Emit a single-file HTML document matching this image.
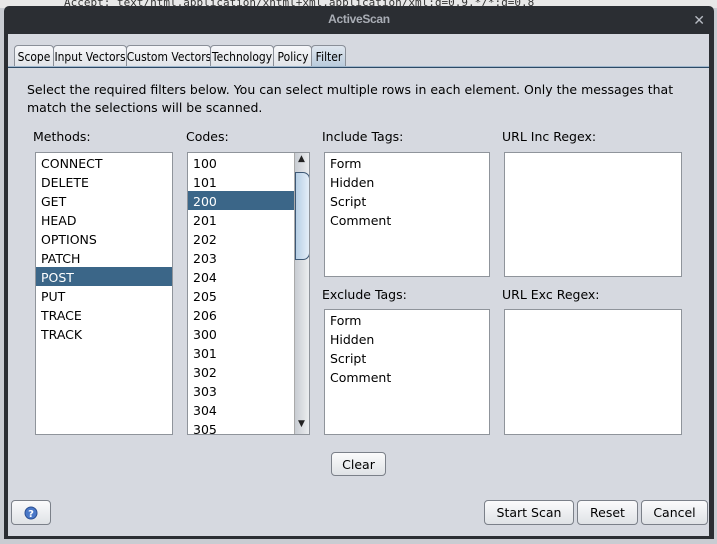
<!DOCTYPE html>
<html><head><meta charset="utf-8"><style>
*{box-sizing:border-box;margin:0;padding:0}
body{width:717px;height:544px;overflow:hidden;background:#c9ccd2;font-family:"DejaVu Sans","Liberation Sans",sans-serif;font-size:12px;color:#000;position:relative}
.abs{position:absolute}
.top{left:0;top:0;width:717px;height:8px;background:#e8e8e8;font-family:"DejaVu Sans Mono",monospace;font-size:11px;line-height:6px;overflow:hidden;padding-left:64px;color:#333;white-space:nowrap}
.win{left:4px;top:6px;width:710px;height:533px;background:#2b2e33;border-radius:5px 5px 0 0}
.title{left:0;top:0;width:710px;height:28px;color:#a9adb5;text-align:center;font-size:12px;line-height:27px;font-family:"Liberation Sans",sans-serif;font-weight:bold;letter-spacing:-0.3px}
.x{right:9px;top:7px;color:#b8bcc4;font-size:14px;font-weight:bold}
.body{left:4px;top:28px;width:701px;height:502px;background:#d6d9e0}
.tab{top:45px;height:22px;border:1px solid #8a8f98;border-bottom:none;border-radius:4px 4px 0 0;background:linear-gradient(#f7f8fa,#dfe2e7);line-height:22px;font-size:12.5px;white-space:nowrap}
.tab span{position:absolute;left:50%;top:0;transform:translateX(-50%) scaleX(0.86)}
.tab.sel{background:linear-gradient(#dfe6ee,#b9cbdc)}
.line{left:8px;top:66px;width:701px;height:2px;background:#2d4a66;border-top:1px solid #9fb6cc}
.desc{left:27px;top:81px;font-size:12.5px;line-height:18px;width:680px}
.lbl{font-size:12.5px}
.box{background:#fff;border:1px solid #8f949b}
.row{height:19px;line-height:19px;padding-left:5px;padding-top:1px;font-size:12.5px}
.row.s{background:#3b6688;color:#fff}
.btn{border:1px solid #7b8089;border-radius:4px;background:linear-gradient(#fbfbfc,#dfe2e6);text-align:center;font-size:12.5px;line-height:24px}
</style></head><body>
<div class="abs top">Accept: text/html,application/xhtml+xml,application/xml;q=0.9,*/*;q=0.8</div>
<div class="abs win">
 <div class="abs title">ActiveScan</div>
 <div class="abs x">✕</div>
 <div class="abs body"></div>
</div>
<div class="abs tab" style="left:14px;width:40px"><span>Scope</span></div>
<div class="abs tab" style="left:53px;width:74px"><span>Input Vectors</span></div>
<div class="abs tab" style="left:126px;width:85px"><span>Custom Vectors</span></div>
<div class="abs tab" style="left:210px;width:64px"><span>Technology</span></div>
<div class="abs tab" style="left:273px;width:39px"><span>Policy</span></div>
<div class="abs tab sel" style="left:311px;width:35px"><span>Filter</span></div>
<div class="abs line"></div>
<div class="abs desc">Select the required filters below. You can select multiple rows in each element. Only the messages that match the selections will be scanned.</div>

<div class="abs lbl" style="left:33px;top:129px">Methods:</div>
<div class="abs lbl" style="left:186px;top:129px">Codes:</div>
<div class="abs lbl" style="left:322px;top:129px">Include Tags:</div>
<div class="abs lbl" style="left:502px;top:129px">URL Inc Regex:</div>
<div class="abs lbl" style="left:322px;top:287px">Exclude Tags:</div>
<div class="abs lbl" style="left:502px;top:287px">URL Exc Regex:</div>

<div class="abs box" style="left:35px;top:152px;width:138px;height:283px">
<div class="row">CONNECT</div><div class="row">DELETE</div><div class="row">GET</div><div class="row">HEAD</div><div class="row">OPTIONS</div><div class="row">PATCH</div><div class="row s">POST</div><div class="row">PUT</div><div class="row">TRACE</div><div class="row">TRACK</div>
</div>
<div class="abs box" style="left:187px;top:152px;width:123px;height:283px;overflow:hidden">
<div style="width:106px">
<div class="row">100</div><div class="row">101</div><div class="row s">200</div><div class="row">201</div><div class="row">202</div><div class="row">203</div><div class="row">204</div><div class="row">205</div><div class="row">206</div><div class="row">300</div><div class="row">301</div><div class="row">302</div><div class="row">303</div><div class="row">304</div><div class="row">305</div>
</div>
<div class="abs" style="left:106px;top:0;width:16px;height:281px;background:linear-gradient(90deg,#c8ccd2,#eef0f2);border-left:1px solid #aaa">
 <div class="abs" style="left:3px;top:1px;font-size:9px;color:#222">▲</div>
 <div class="abs" style="left:0px;top:19px;width:15px;height:88px;border:1px solid #3d5875;border-radius:0 7px 7px 0;background:linear-gradient(90deg,#b7cfe5,#e4eef8)"></div>
 <div class="abs" style="left:3px;top:266px;font-size:9px;color:#222">▼</div>
</div>
</div>
<div class="abs box" style="left:324px;top:152px;width:166px;height:125px">
<div class="row">Form</div><div class="row">Hidden</div><div class="row">Script</div><div class="row">Comment</div></div>
<div class="abs box" style="left:504px;top:152px;width:178px;height:125px"></div>
<div class="abs box" style="left:324px;top:309px;width:166px;height:126px">
<div class="row">Form</div><div class="row">Hidden</div><div class="row">Script</div><div class="row">Comment</div></div>
<div class="abs box" style="left:504px;top:309px;width:178px;height:126px"></div>

<div class="abs btn" style="left:331px;top:452px;width:55px;height:24px">Clear</div>
<div class="abs btn" style="left:11px;top:500px;width:40px;height:25px">
 <svg width="14" height="14" style="margin-top:5px" viewBox="0 0 14 14"><circle cx="7" cy="7" r="6" fill="#4a78c8" stroke="#2c4f92"/><text x="7" y="11" font-size="10" font-weight="bold" fill="#fff" text-anchor="middle" font-family="DejaVu Sans">?</text></svg>
</div>
<div class="abs btn" style="left:484px;top:500px;width:90px;height:25px">Start Scan</div>
<div class="abs btn" style="left:577px;top:500px;width:61px;height:25px">Reset</div>
<div class="abs btn" style="left:641px;top:500px;width:67px;height:25px">Cancel</div>
</body></html>
